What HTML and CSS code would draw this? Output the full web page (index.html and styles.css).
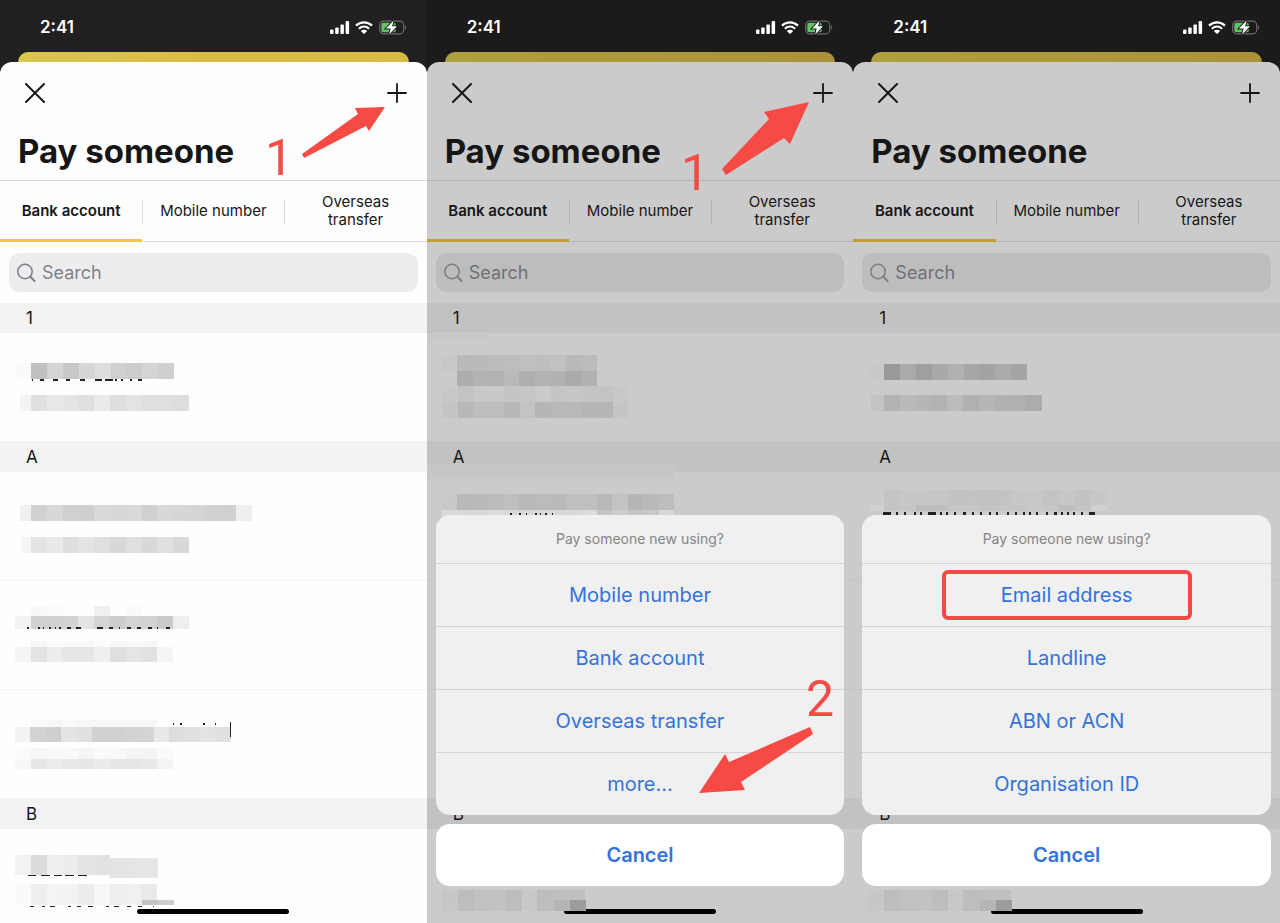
FILE: index.html
```html
<!DOCTYPE html>
<html lang="en">
<head>
    <meta charset="UTF-8">
    <meta name="viewport" content="width=device-width, initial-scale=1.0">
    <title>Pay someone</title>
    <link rel="stylesheet" href="styles.css">
</head>
<body>
    <!-- Icons shared by the three screens -->
    <svg class="sprite" aria-hidden="true">
        <symbol id="signal" viewBox="0 0 20 13">
            <rect x="0" y="8.500" width="3.500" height="4.500" rx="1"/>
            <rect x="5.200" y="6.500" width="3.500" height="6.500" rx="1"/>
            <rect x="10.400" y="3.500" width="3.500" height="9.500" rx="1"/>
            <rect x="15.600" y="0" width="3.500" height="13" rx="1"/>
        </symbol>
        <symbol id="wifi" viewBox="0 0 18 13">
            <path d="M1 4.600C5.600.3 12.400.3 17 4.600M3.900 7.700c3-2.700 7.200-2.700 10.200 0" fill="none" stroke="#fff" stroke-width="2.200"/>
            <path d="M9 13 5.800 9.900c1.900-1.600 4.500-1.600 6.400 0z"/>
        </symbol>
        <symbol id="battery" viewBox="0 0 28 15">
            <rect x=".7" y="1.200" width="24" height="12.600" rx="3.800" fill="none" stroke="#6d6b6b" stroke-width="1.200"/>
            <path d="M26.200 5.300c1.400.6 1.400 3.800 0 4.400z" fill="#6d6b6b"/>
            <rect x="2.300" y="2.800" width="14.500" height="9.400" rx="2" fill="#5fc466"/>
            <path class="bolt" d="M14.600.6 7 8.600h4.700l-1.500 5.800 7.700-8.200h-4.800z"/>
        </symbol>
        <symbol id="close" viewBox="0 0 20 20">
            <path d="M1 1l18 18M19 1 1 19" fill="none" stroke="#151515" stroke-width="2" stroke-linecap="round"/>
        </symbol>
        <symbol id="plus" viewBox="0 0 20 20">
            <path d="M10 1v18M1 10h18" fill="none" stroke="#151515" stroke-width="1.800" stroke-linecap="round"/>
        </symbol>
        <symbol id="lens" viewBox="0 0 20 20">
            <circle cx="8" cy="8.500" r="7.200" fill="none" stroke="#7d7d82" stroke-width="1.500"/>
            <path d="M13.300 13.800l4.200 4.200" fill="none" stroke="#7d7d82" stroke-width="2" stroke-linecap="round"/>
        </symbol>
    </svg>

    <main class="screens">
        <section class="screen">
            <div class="status">
                <span class="time">2:41</span>
                <svg class="signal"><use href="#signal"/></svg>
                <svg class="wifi"><use href="#wifi"/></svg>
                <svg class="battery"><use href="#battery"/></svg>
            </div>
            <div class="card-behind"></div>
            <div class="card">
                <header class="top">
                    <div class="actions">
                        <button class="icon-button" aria-label="Close"><svg><use href="#close"/></svg></button>
                        <button class="icon-button" aria-label="Add"><svg><use href="#plus"/></svg></button>
                    </div>
                    <h1>Pay someone</h1>
                </header>
                <nav class="tabs">
                    <button class="tab active">Bank account</button>
                    <button class="tab">Mobile number</button>
                    <button class="tab">Overseas transfer</button>
                </nav>
                <div class="search">
                    <svg><use href="#lens"/></svg>
                    <input type="search" placeholder="Search" aria-label="Search">
                </div>
                <h2>1</h2>
                <div class="payee"><svg class="mosaic" data-mosaic="one-1"></svg></div>
                <h2>A</h2>
                <div class="payee"><svg class="mosaic" data-mosaic="one-2"></svg></div>
                <div class="payee"><svg class="mosaic" data-mosaic="one-3"></svg></div>
                <div class="payee"><svg class="mosaic" data-mosaic="one-4"></svg></div>
                <h2>B</h2>
                <div class="payee"><svg class="mosaic" data-mosaic="one-5"></svg></div>
            </div>
            <div class="home-bar"></div>
            <svg class="notes">
                <text x="265" y="175">1</text>
                <path d="M302 154 358 114 355 108 385 107 369 131 366 126 304 158z"/>
            </svg>
        </section>

        <section class="screen dimmed">
            <div class="status">
                <span class="time">2:41</span>
                <svg class="signal"><use href="#signal"/></svg>
                <svg class="wifi"><use href="#wifi"/></svg>
                <svg class="battery"><use href="#battery"/></svg>
            </div>
            <div class="card-behind"></div>
            <div class="card">
                <header class="top">
                    <div class="actions">
                        <button class="icon-button" aria-label="Close"><svg><use href="#close"/></svg></button>
                        <button class="icon-button" aria-label="Add"><svg><use href="#plus"/></svg></button>
                    </div>
                    <h1>Pay someone</h1>
                </header>
                <nav class="tabs">
                    <button class="tab active">Bank account</button>
                    <button class="tab">Mobile number</button>
                    <button class="tab">Overseas transfer</button>
                </nav>
                <div class="search">
                    <svg><use href="#lens"/></svg>
                    <input type="search" placeholder="Search" aria-label="Search">
                </div>
                <h2>1</h2>
                <div class="payee"><svg class="mosaic" data-mosaic="two-1"></svg></div>
                <h2>A</h2>
                <div class="payee"><svg class="mosaic" data-mosaic="two-2"></svg></div>
                <div class="payee"></div>
                <div class="payee"></div>
                <h2>B</h2>
                <div class="payee"><svg class="mosaic" data-mosaic="two-5"></svg></div>
            </div>
            <div class="home-bar"></div>
            <div class="sheet">
                <div class="options">
                    <p>Pay someone new using?</p>
                    <button>Mobile number</button>
                    <button>Bank account</button>
                    <button>Overseas transfer</button>
                    <button>more...</button>
                </div>
                <button class="cancel">Cancel</button>
            </div>
            <svg class="notes">
                <text x="254" y="190">1</text>
                <path d="M295 169 342 119 337 112 382 102 363 144 357 138 299 175z"/>
                <text x="379" y="716">2</text>
                <path d="M383 727 302 762 298 754 272 793 318 790 314 782 386 734z"/>
            </svg>
        </section>

        <section class="screen dimmed">
            <div class="status">
                <span class="time">2:41</span>
                <svg class="signal"><use href="#signal"/></svg>
                <svg class="wifi"><use href="#wifi"/></svg>
                <svg class="battery"><use href="#battery"/></svg>
            </div>
            <div class="card-behind"></div>
            <div class="card">
                <header class="top">
                    <div class="actions">
                        <button class="icon-button" aria-label="Close"><svg><use href="#close"/></svg></button>
                        <button class="icon-button" aria-label="Add"><svg><use href="#plus"/></svg></button>
                    </div>
                    <h1>Pay someone</h1>
                </header>
                <nav class="tabs">
                    <button class="tab active">Bank account</button>
                    <button class="tab">Mobile number</button>
                    <button class="tab">Overseas transfer</button>
                </nav>
                <div class="search">
                    <svg><use href="#lens"/></svg>
                    <input type="search" placeholder="Search" aria-label="Search">
                </div>
                <h2>1</h2>
                <div class="payee"><svg class="mosaic" data-mosaic="three-1"></svg></div>
                <h2>A</h2>
                <div class="payee"><svg class="mosaic" data-mosaic="three-2"></svg></div>
                <div class="payee"></div>
                <div class="payee"></div>
                <h2>B</h2>
                <div class="payee"><svg class="mosaic" data-mosaic="two-5"></svg></div>
            </div>
            <div class="home-bar"></div>
            <div class="sheet">
                <div class="options">
                    <p>Pay someone new using?</p>
                    <button><span class="highlight">Email address</span></button>
                    <button>Landline</button>
                    <button>ABN or ACN</button>
                    <button>Organisation ID</button>
                </div>
                <button class="cancel">Cancel</button>
            </div>
        </section>
    </main>

    <script src="mosaic.js"></script>
</body>
</html>
```
FILE: styles.css
```css
* {
    margin: 0;
    padding: 0;
    box-sizing: border-box;
}

body {
    font-family: Inter, "Liberation Sans", sans-serif;
    background: #1c1a1a;
    color: #161616;
}

button,
input {
    font: inherit;
    color: inherit;
    border: none;
    background: none;
}

button {
    cursor: pointer;
}

.sprite {
    position: absolute;
    width: 0;
    height: 0;
}

.screens {
    display: grid;
    grid-template-columns: repeat(3, 1fr);
    height: 100vh;
    overflow: hidden;
}

.screen {
    --paper: #fefefe;
    --band: #f3f3f3;
    --line: #dcdcdc;
    --row-line: #f4f4f4;
    --field: #ededef;
    --yellow: #eec83f;
    position: relative;
    display: flex;
    flex-direction: column;
    min-width: 0;
    overflow: hidden;
    background: #221f20;
}

.dimmed {
    --paper: #cbcbcb;
    --band: #c2c2c2;
    --line: #b3b3b3;
    --row-line: #c4c4c4;
    --field: #bdbdbd;
    --yellow: #c2a02f;
    background: #1c1a1a;
}

/* Status bar */
.status {
    flex: none;
    display: flex;
    align-items: center;
    height: 52px;
    padding: 2px 20px 0 40px;
    color: #fff;
    fill: #fff;
}

.time {
    flex: 1;
    font-size: 17px;
    font-weight: 600;
}

.signal {
    width: 20px;
    height: 13px;
    margin-right: 5px;
}

.wifi {
    width: 18px;
    height: 13px;
    margin-right: 6px;
}

.battery {
    width: 28px;
    height: 15px;
}

.bolt {
    stroke: #1f1d1d;
    stroke-width: 2px;
    paint-order: stroke;
}

/* Card */
.card-behind {
    flex: none;
    height: 22px;
    margin: 0 18px -12px;
    border-radius: 10px 10px 0 0;
    background: linear-gradient(90deg, #d9c64c, #d9bd48 40%, #d7b944);
}

.dimmed .card-behind {
    background: linear-gradient(90deg, #aea041, #ae983c 40%, #ab9239);
}

.card {
    flex: 1;
    min-height: 0;
    position: relative;
    border-radius: 12px 12px 0 0;
    background: var(--paper);
}

.top {
    height: 119px;
    padding: 21px 20px 0 18px;
    border-bottom: 1px solid var(--line);
}

.actions {
    display: flex;
    justify-content: space-between;
    padding-left: 7px;
}

.icon-button,
.icon-button svg {
    display: block;
    width: 20px;
    height: 20px;
}

h1 {
    margin-top: 27px;
    font-size: 33px;
    line-height: 42px;
    font-weight: 700;
}

.tabs {
    display: grid;
    grid-template-columns: repeat(3, 1fr);
    height: 61px;
    border-bottom: 1px solid var(--line);
}

.tab {
    position: relative;
    padding: 0 28px;
    font-size: 15px;
    line-height: 18px;
}

.tab:nth-child(-n+2) {
    padding: 0;
}

.tab + .tab::before {
    content: '';
    position: absolute;
    left: 0;
    top: 19px;
    width: 1px;
    height: 24px;
    background: var(--line);
}

.tab.active {
    font-weight: 600;
}

.tab.active::after {
    content: '';
    position: absolute;
    left: 0;
    bottom: -1px;
    width: 100%;
    height: 3px;
    background: var(--yellow);
}

.search {
    display: flex;
    align-items: center;
    gap: 5px;
    height: 39px;
    margin: 11px 9px;
    padding: 0 8px;
    border-radius: 11px;
    background: var(--field);
}

.search svg {
    width: 20px;
    height: 20px;
}

.search input {
    flex: 1;
    min-width: 0;
    font-size: 18px;
    outline: none;
}

.search input::placeholder {
    color: #828286;
    opacity: 1;
}

.dimmed .search input::placeholder {
    color: #717175;
}

h2 {
    height: 30px;
    padding-left: 26px;
    background: var(--band);
    font-size: 17px;
    line-height: 30px;
    font-weight: 400;
}

.payee {
    height: 109px;
    border-bottom: 1px solid var(--row-line);
}

/* Blurred names sit above the home bar */
.mosaic {
    display: block;
    position: relative;
    z-index: 2;
    width: 100%;
    height: 108px;
    overflow: visible;
}

.home-bar {
    position: absolute;
    left: 50%;
    bottom: 9px;
    z-index: 1;
    width: 152px;
    height: 5px;
    margin-left: -76px;
    border-radius: 3px;
    background: #000;
}

/* Action sheet */
.sheet {
    position: absolute;
    left: 9px;
    right: 9px;
    bottom: 37px;
    z-index: 3;
    display: flex;
    flex-direction: column;
    gap: 9px;
    color: #3473da;
    font-size: 20px;
}

.options {
    display: flex;
    flex-direction: column;
    overflow: hidden;
    border-radius: 14px;
    background: #f0f0f0;
}

.options p {
    color: #858585;
    font-size: 14px;
    line-height: 48px;
    text-align: center;
}

.options button {
    display: flex;
    align-items: center;
    justify-content: center;
    height: 63px;
    border-top: 1px solid #d4d4d4;
}

.highlight {
    display: flex;
    align-items: center;
    justify-content: center;
    width: 250px;
    height: 50px;
    border: 4px solid #f24a44;
    border-radius: 6px;
}

.cancel {
    height: 62px;
    border-radius: 14px;
    background: #fff;
    font-weight: 600;
}

/* Hand-drawn steps */
.notes {
    position: absolute;
    inset: 0;
    z-index: 4;
    width: 100%;
    height: 100%;
    pointer-events: none;
    fill: #f64a45;
    font-family: Roboto, sans-serif;
    font-size: 50px;
}
```
FILE: mosaic.js
```js
// Each strip: [x, y, tile width, height, grey levels from left to right].
// Ticks: [y, height, x, width, x, width, ...] for the strokes left below a strip.
const mosaics = {
    'one-1': {
        strips: [
            [15, 30, 16, 16, 'fa'],
            [31, 30, 15.9, 16, 'c0 d4 c8 d6 de d0 cc d5 cf'],
            [20, 62, 11, 16, 'f3'],
            [31, 62, 15.8, 16, 'e0 e8 e4 e0 ea de e3 df df dd']
        ],
        ticks: [46, 2, 32, 1, 40, 4, 53, 5, 66, 4, 80, 5, 95, 7, 105, 8, 115, 2, 121, 2, 130, 2, 138, 4]
    },
    'one-2': {
        strips: [
            [20, 33, 11, 16, 'f1'],
            [31, 33, 15.8, 16, 'd1 d8 d0 cf d9 d7 d9 d0 d8 d6 d5 d1 d0 ef'],
            [22, 65, 9, 16, 'f6'],
            [31, 65, 15.8, 16, 'e4 e9 de e4 df d8 df d8 e0 d8']
        ]
    },
    'one-3': {
        strips: [
            [31, 25, 15.8, 10, 'f8 fb fe fe f0 fe fa'],
            [15, 35, 15.8, 13, 'f2 d0 d0 d2 e3 d5 cd d4 d2 cb ee'],
            [31, 60, 15.8, 6, 'f7 fb f8 f8 fb f7 f9 f7'],
            [15, 66, 15.8, 15, 'f5 e3 ed e6 e6 ef df e5 e1 f5']
        ],
        ticks: [46, 2, 27, 2, 38, 2, 43, 1, 49, 2, 55, 1, 59, 2, 67, 4, 76, 5, 97, 6, 109, 4, 119, 1, 127, 4, 137, 4, 148, 4, 157, 1, 166, 4]
    },
    'one-4': {
        strips: [
            [31, 30, 15.8, 7, 'f9 f7 f9 f7 f7 f7 f8 f8'],
            [15, 37, 15.4, 15, 'f3 d2 cf e4 e0 d1 d0 d2 d4 e8 dd e0 e3 e0'],
            [15, 58, 15.8, 11, 'fb f6 f9 f9 f5 fa f9 f5 f5 fa'],
            [15, 69, 15.8, 10, 'f8 e6 ec e8 e6 eb e6 e6 e8 f4']
        ],
        ticks: [33, 2, 173, 1, 180, 2, 203, 2, 215, 1, 230, 1],
        cursor: [230, 32, 1, 15]
    },
    'one-5': {
        strips: [
            [15, 26, 15.8, 20, 'f2 dc ee ec e4 e2'],
            [110, 29, 16, 20, 'e4 e5 e6'],
            [15, 55, 15.8, 21, 'fa ee f4 f3 ed f7 ee f0 ea'],
            [142, 71, 16, 5, 'c4 cd']
        ],
        ticks: [46, 1, 28, 8, 41, 9, 54, 8, 65, 9, 78, 9],
        low: [77, 1, 30, 4, 42, 3, 50, 5, 68, 3, 77, 4, 88, 5, 106, 3, 114, 5, 127, 4, 138, 4, 153, 1]
    },
    'two-1': {
        strips: [
            [2, 1, 60, 5, 'c7'],
            [15, 22, 15, 16, 'c8'],
            [30, 22, 15.5, 16, 'b9 ba bc bd bf be c1 b9 bb'],
            [30, 38, 15.5, 15, 'ad b3 b2 b9 ae b3 b1 aa b1'],
            [15, 53, 15.5, 16, 'c8 c3 c9 c9 c5 c6 ca c5 c6 c4 c3 c8'],
            [15, 69, 15.5, 16, 'c4 b8 be bd b8 c3 b5 b9 b9 b6 b5 c5']
        ]
    },
    'two-2': {
        strips: [
            [0, -8, 248, 15, 'c6'],
            [15, 22, 15, 16, 'c9'],
            [30, 22, 15.5, 16, 'b9 ba bb bf b9 bb ba bf c0 b9 c3 b5 ba bd'],
            [15, 38, 15, 7, 'da'],
            [30, 38, 15.5, 7, 'd8 d8 db d8 d7 d9 d8 d8 dc c4 cc c4 c8 d8']
        ],
        ticks: [41, 4, 83, 2, 92, 2, 99, 1, 108, 2, 113, 1, 118, 2, 125, 1]
    },
    'two-5': {
        strips: [
            [15, 61, 15.9, 21, 'c7 bd c1 c2 bd c8 bd bf c0'],
            [127, 71, 16, 11, 'b5 9c']
        ]
    },
    'three-1': {
        strips: [
            [15, 31, 16, 16, 'c8'],
            [31, 31, 15.9, 16, '99 aa 9f a9 b1 a7 a3 ab a5'],
            [18, 62, 13, 16, 'c3'],
            [31, 62, 15.8, 16, 'b2 ba b6 b2 bc b0 b6 b1 b0 ac']
        ]
    },
    'three-2': {
        strips: [
            [31, 18, 15.9, 15, 'c4 c7 c7 c6 c2 c3 c2 c3 c7 c8 c3 c7 c2 c7'],
            [18, 33, 13, 6, 'd1'],
            [31, 33, 15.9, 6, 'c3 c5 bc be c5 c6 c3 c5 c4 c8 c5 be c4 d0']
        ],
        ticks: [40, 3, 30, 8, 43, 2, 51, 2, 61, 2, 67, 2, 75, 8, 87, 2, 93, 2, 101, 2, 110, 3, 119, 2, 127, 2, 136, 2, 143, 2, 154, 2, 162, 2, 170, 2, 176, 2, 183, 2, 193, 2, 201, 3, 208, 2, 214, 2, 220, 2, 228, 2, 236, 6]
    }
};

function addRect(svg, x, y, width, height, fill) {
    const rect = document.createElementNS('http://www.w3.org/2000/svg', 'rect');
    rect.setAttribute('x', x);
    rect.setAttribute('y', y);
    rect.setAttribute('width', width);
    rect.setAttribute('height', height);
    rect.setAttribute('fill', fill);
    svg.appendChild(rect);
}

function addTicks(svg, ticks) {
    for (let i = 2; i < ticks.length; i += 2) {
        addRect(svg, ticks[i], ticks[0], ticks[i + 1], ticks[1], '#222');
    }
}

document.querySelectorAll('.mosaic').forEach(function(svg) {
    const mosaic = mosaics[svg.dataset.mosaic];
    svg.setAttribute('shape-rendering', 'crispEdges');
    mosaic.strips.forEach(function([x, y, tile, height, greys]) {
        greys.split(' ').forEach(function(grey, i) {
            const left = Math.round(x + i * tile);
            const right = Math.round(x + (i + 1) * tile);
            addRect(svg, left, y, right - left, height, '#' + grey + grey + grey);
        });
    });
    addTicks(svg, mosaic.ticks || []);
    addTicks(svg, mosaic.low || []);
    if (mosaic.cursor) {
        addRect(svg, ...mosaic.cursor, '#222');
    }
});
```
